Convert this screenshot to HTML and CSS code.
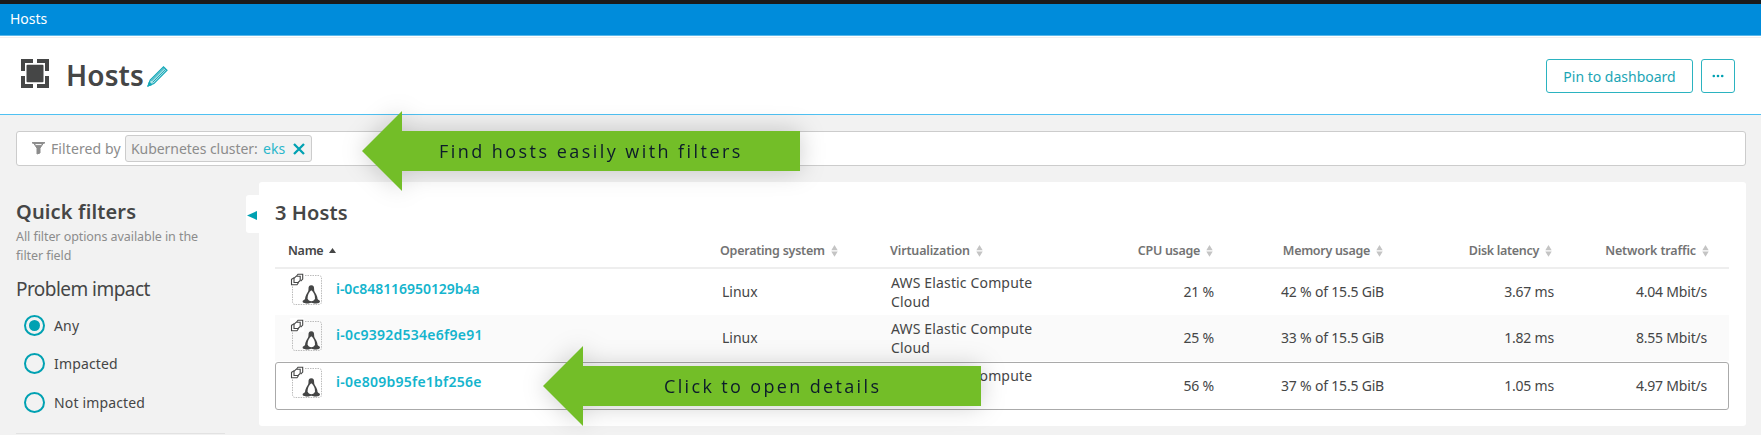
FILE: index.html
```html
<!DOCTYPE html>
<html lang="en">
<head>
<meta charset="utf-8">
<title>Hosts</title>
<link rel="stylesheet" href="styles.css">
</head>
<body>
<svg class="defs" width="0" height="0">
  <symbol id="sort" viewBox="0 0 7 12"><path d="M3.500 0 6.700 5.200H.3zM.3 6.500h6.400L3.500 11.800z" fill="#c4c4c4"/></symbol>
  <symbol id="linux" viewBox="0 0 34 34">
    <rect x="2.500" y="3.500" width="29" height="29" rx="2.500" fill="none" stroke="#bbb" stroke-dasharray="1.500 1"/>
    <path d="M0 0h14v14H0z" class="knock"/>
    <g fill="none" stroke="#454646" stroke-width="1.100"><path d="M4.200 5.800 1.500 7.400v5.300h5.500l1.600-2.200"/><path d="M6.600 4 8 2.200h4.700v4.900l-2 2.100"/><path d="M6.200 4.200h4v4.300l-2.100 2H4V6.300z"/></g>
    <path d="M21.300 13.300c-2.200 0-2.900 1.600-2.800 3.700.1 2.500-1.200 3.700-2.300 5.700-.8 1.500-1.100 3-1.200 4.400-.7 1-2.500 1.200-2.400 2.600.2 1.300 3.400 1.800 5 1.800 1.300 0 1.700-.8 3.700-.8s2.400.8 3.700.8c1.600 0 4.800-.5 5-1.800.1-1.400-1.700-1.600-2.400-2.600-.1-1.400-.4-2.900-1.200-4.400-1.100-2-2.400-3.200-2.300-5.700.1-2.100-.6-3.700-2.800-3.700z" fill="#454646"/>
    <path d="M21.300 18.300c-2.200 1.500-3.900 5.200-3.700 7.900.2 1.900 2.200 3 3.700 3s3.500-1.100 3.700-3c.2-2.700-1.500-6.400-3.700-7.900z" class="belly"/>
  </symbol>
</svg>
<div class="topbar">Hosts</div>
<header class="header">
  <svg class="host-icon" width="28" height="29" viewBox="0 0 28 29" fill="#454646"><path d="M0 0h12v4H4v8H0zM16 0h12v12h-4V4h-8zM0 17h4v8h8v4H0zM24 17h4v12H16v-4h8z"/><rect x="5.500" y="5.800" width="17" height="17.400" rx="1"/></svg>
  <h1 class="title">Hosts</h1>
  <svg class="pencil" width="22" height="22" viewBox="0 0 22 22" fill="none" stroke="#15a8b8"><path d="M1 21l2.200-6L16.500 1.800l3.500 3.400L6.900 18.600z" stroke-width="1.200"/><path d="M4.400 16 17.500 2.900M5.700 17.300 18.800 4.100" stroke-width="1"/><path d="M1 21l1.300-4L5 19.600z" fill="#15a8b8"/></svg>
  <div class="actions">
    <button class="btn">Pin to dashboard</button>
    <button class="btn more"><svg width="12" height="4" viewBox="0 0 12 4" fill="#00a1b2"><circle cx="1.800" cy="2" r="1.300"/><circle cx="6" cy="2" r="1.300"/><circle cx="10.200" cy="2" r="1.300"/></svg></button>
  </div>
</header>
<div class="filterbar">
  <svg class="funnel" width="13" height="13" viewBox="0 0 13 13" fill="none" stroke="#8c8c8c"><path d="M1.500 1h10L8 6.200V11l-3 1V6.200z" fill="#8c8c8c"/><path d="M0 .8h13" stroke-width="1.500"/><path d="M3.500 2.600h6" stroke="#fff" stroke-width="1"/></svg>
  <span class="filtered">Filtered by</span>
  <span class="chip"><span class="key">Kubernetes cluster:</span><span class="value">eks</span><svg width="12" height="12" viewBox="0 0 12 12" stroke="#00a1b2" stroke-width="2.300"><path d="M1 1l10 10M11 1 1 11"/></svg></span>
</div>
<div class="content">
  <aside class="sidebar">
    <h2 class="side-title">Quick filters</h2>
    <p class="hint">All filter options available in the filter field</p>
    <h3 class="group">Problem impact</h3>
    <label class="option"><span class="radio on"></span><span>Any</span></label>
    <label class="option"><span class="radio"></span><span>Impacted</span></label>
    <label class="option"><span class="radio"></span><span>Not impacted</span></label>
    <div class="rule"></div>
  </aside>
  <main class="panel">
    <div class="collapse"><svg width="10" height="9" viewBox="0 0 10 9"><path d="M0 4.500 10 0v9z" fill="#00a1b2"/></svg></div>
    <h2 class="panel-title">3 Hosts</h2>
    <div class="row head">
      <div class="name-h"><span>Name</span><svg width="7" height="5" viewBox="0 0 7 5"><path d="M3.500 0 7 5H0z" fill="#454646"/></svg></div>
      <div class="os"><span>Operating system</span><svg width="7" height="12"><use href="#sort"/></svg></div>
      <div class="virt"><span>Virtualization</span><svg width="7" height="12"><use href="#sort"/></svg></div>
      <div class="num"><span>CPU usage</span><svg width="7" height="12"><use href="#sort"/></svg></div>
      <div class="num"><span>Memory usage</span><svg width="7" height="12"><use href="#sort"/></svg></div>
      <div class="num disk"><span>Disk latency</span><svg width="7" height="12"><use href="#sort"/></svg></div>
      <div class="num last"><span>Network traffic</span><svg width="7" height="12"><use href="#sort"/></svg></div>
    </div>
    <div class="row">
      <div class="name"><svg width="34" height="34"><use href="#linux"/></svg><a>i-0c848116950129b4a</a></div>
      <div class="os">Linux</div><div class="virt">AWS Elastic Compute Cloud</div>
      <div class="num">21 %</div><div class="num">42 % of 15.5 GiB</div><div class="num">3.67 ms</div><div class="num last">4.04 Mbit/s</div>
    </div>
    <div class="row alt">
      <div class="name"><svg width="34" height="34"><use href="#linux"/></svg><a class="wide">i-0c9392d534e6f9e91</a></div>
      <div class="os">Linux</div><div class="virt">AWS Elastic Compute Cloud</div>
      <div class="num">25 %</div><div class="num">33 % of 15.5 GiB</div><div class="num">1.82 ms</div><div class="num last">8.55 Mbit/s</div>
    </div>
    <div class="row selected">
      <div class="name"><svg width="34" height="34"><use href="#linux"/></svg><a class="wide">i-0e809b95fe1bf256e</a></div>
      <div class="os">Linux</div><div class="virt">AWS Elastic Compute Cloud</div>
      <div class="num">56 %</div><div class="num">37 % of 15.5 GiB</div><div class="num">1.05 ms</div><div class="num last">4.97 Mbit/s</div>
    </div>
  </main>
</div>
<div class="callout callout-filters"><div class="arrow"></div><span>Find hosts easily with filters</span></div>
<div class="callout callout-details"><div class="arrow"></div><span>Click to open details</span></div>
</body>
</html>
```
FILE: styles.css
```css
* { box-sizing: border-box; }
body { margin: 0; height: 435px; overflow: hidden; position: relative; background: #f2f2f2; color: #454646; font: 14px/19px "Noto Sans", sans-serif; letter-spacing: -0.2px; }
h1, h2, h3, p { margin: 0; }
svg { display: block; flex: none; }
.defs { position: absolute; }
.topbar { height: 36px; border-top: 4px solid #1b1b1b; border-bottom: 1px solid #5bb8ea; background: #008cdb; color: #fff; padding: 5px 10px; letter-spacing: 0; }
.header { height: 79px; display: flex; background: #fff; border-top: 1px solid #fff; border-bottom: 1px solid #4fc1f2; box-shadow: inset 0 1px #f0f0f0; padding: 0 26px 0 21px; }
.host-icon { margin-top: 22px; }
.title { margin: 19px 0 0 17px; width: 80px; font-size: 28px; line-height: 38px; font-weight: 600; letter-spacing: 0.1px; }
.pencil { margin: 28px 0 0 1px; fill: #9cdbe1; }
.pencil path:first-child { fill: #b5e4e9; }
.actions { margin: 22px 0 0 auto; display: flex; gap: 8px; }
.btn { height: 34px; width: 147px; padding: 0; border: 1px solid #2bb3c0; border-radius: 3px; background: #fff; color: #1ba5b5; font: inherit; letter-spacing: 0; }
.more { width: 34px; display: flex; align-items: center; justify-content: center; }
.filterbar { margin: 16px 15px 0 16px; height: 35px; border: 1px solid #ccc; border-radius: 3px; background: #fff; display: flex; align-items: center; color: #8c8c8c; }
.funnel { margin-left: 15px; }
.filtered { margin-left: 6px; width: 74px; letter-spacing: 0.1px; }
.chip { width: 187px; height: 27px; border: 1px solid #ccc; border-radius: 3px; background: #f2f2f2; padding-left: 5px; display: flex; align-items: center; }
.key { width: 132px; letter-spacing: -0.05px; }
.value { width: 30px; color: #2ab6ca; letter-spacing: 0.1px; }
.content { display: flex; margin-top: 16px; }
.sidebar { width: 259px; padding-left: 16px; }
.side-title { margin-top: 17px; font-size: 20px; line-height: 26px; font-weight: 600; letter-spacing: 0.15px; }
.hint { margin-top: 2px; width: 195px; font-size: 12.5px; color: #8c8c8c; letter-spacing: -0.07px; }
.group { margin-top: 11px; font-size: 19px; line-height: 26px; font-weight: 400; letter-spacing: -0.55px; }
.option { display: flex; align-items: center; height: 22px; margin: 0 0 16.500px 8px; gap: 9px; letter-spacing: 0.15px; }
.group + .option { margin-top: 12px; }
.radio { width: 21px; height: 21px; border: 2px solid #00a1b2; border-radius: 50%; display: flex; }
.on::after { content: ""; width: 11px; height: 11px; margin: auto; border-radius: 50%; background: #00a1b2; }
.rule { width: 209px; height: 1px; background: #e2e2e2; margin-top: 20px; }
.panel { position: relative; width: 1487px; height: 244px; padding: 17px 17px 0 16px; background: #fff; border-radius: 3px; }
.collapse { position: absolute; left: -13px; top: 13px; width: 14px; height: 38px; background: #fff; border-radius: 3px 0 0 3px; display: flex; align-items: center; padding: 3px 0 0 1px; }
.panel-title { font-size: 20px; line-height: 27px; font-weight: 600; letter-spacing: 0.1px; }
.row { display: grid; grid-template-columns: 435px repeat(5, 170px) 169px; align-items: center; height: 46px; padding-bottom: 1px; }
.row .os { padding-left: 12px; letter-spacing: 0; }
.row .virt { padding-left: 11px; width: 160px; letter-spacing: 0.15px; }
.num { text-align: right; padding-right: 6px; }
.row .last { padding-right: 22px; }
.name { display: flex; gap: 12px; padding: 0 0 6px 15px; }
.name a { color: #14b4cd; font-weight: 600; margin-top: 7px; letter-spacing: -0.05px; }
.name .wide { letter-spacing: 0.25px; }
.knock, .belly { fill: #fff; }
.alt { background: #fafafa; }
.selected { height: 48px; margin-top: 1px; padding-bottom: 2px; border: 1px solid #aaa; border-radius: 3px; grid-template-columns: 434px repeat(5, 170px) 168px; }
.selected .name { padding-left: 14px; }
.selected .last { padding-right: 21px; }
.head { height: 43px; padding-bottom: 0; border-bottom: 2px solid #eee; font-size: 12.5px; font-weight: 600; color: #737373; letter-spacing: -0.3px; }
.row.head > div { display: flex; align-items: center; gap: 6px; padding-top: 8px; }
.head .num { justify-content: flex-end; padding-right: 7px; }
.head .name-h { padding-left: 13px; color: #454646; }
.head .os { padding-left: 10px; letter-spacing: -0.25px; }
.head .virt { padding-left: 10px; letter-spacing: -0.15px; }
.head .disk { padding-right: 8px; }
.head .last { padding-right: 20px; letter-spacing: -0.15px; }
.callout { position: absolute; width: 438px; height: 80px; color: #0c1b2b; font: 18px/24px "Open Sans", sans-serif; filter: drop-shadow(0 0 12px rgba(0,0,0,.2)); }
.arrow { position: absolute; inset: 0; background: #73be28; clip-path: polygon(0 50%, 40px 0, 40px 20px, 100% 20px, 100% 60px, 40px 60px, 40px 100%); }
.callout span { position: absolute; top: 28px; white-space: nowrap; }
.callout-filters { left: 362px; top: 111px; letter-spacing: 2.450px; }
.callout-filters span { left: 77px; }
.callout-details { left: 543px; top: 346px; letter-spacing: 2.350px; }
.callout-details span { left: 121px; }
```
